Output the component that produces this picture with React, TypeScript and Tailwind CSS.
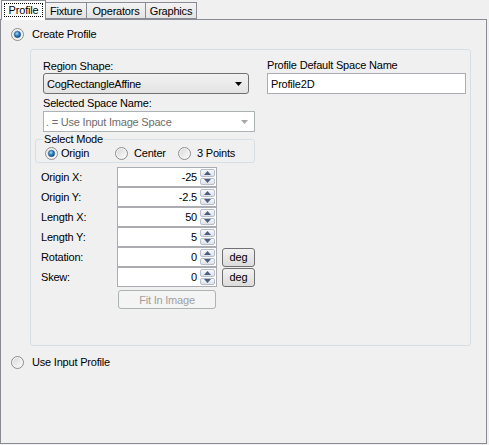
import { useId } from "react";

function Radio({ checked }: { checked?: boolean }) {
  const id = useId();
  return (
    <svg width="13" height="13" viewBox="0 0 13 13" className="shrink-0">
      <defs>
        <linearGradient id={`${id}-o`} x1="0" y1="0" x2="1" y2="1">
          <stop offset="0" stopColor="#d9d9d9" />
          <stop offset="1" stopColor="#fbfbfb" />
        </linearGradient>
        <radialGradient id={`${id}-d`} cx="0.4" cy="0.35" r="0.7">
          <stop offset="0" stopColor="#a9dcfb" />
          <stop offset="0.5" stopColor="#2d7fc0" />
          <stop offset="1" stopColor="#124677" />
        </radialGradient>
      </defs>
      <circle cx="6.5" cy="6.5" r="6" fill="#f5f5f5" stroke="#8d8d8d" strokeWidth="1" />
      <circle cx="6.5" cy="6.5" r="4.5" fill={`url(#${id}-o)`} />
      {checked && <circle cx="6.5" cy="6.5" r="3.2" fill={`url(#${id}-d)`} stroke="#1c4e7e" strokeWidth="0.5" />}
    </svg>
  );
}

function Arrow({ color = "#000" }: { color?: string }) {
  return (
    <svg width="7" height="4" viewBox="0 0 7 4">
      <path d="M0 0h7L3.5 4z" fill={color} />
    </svg>
  );
}

function Spinner() {
  return (
    <div className="flex flex-col w-[16px] h-full gap-[1px] py-[1px] pr-[1px]">
      <div className="flex-1 flex items-center justify-center border border-[#b8bfca] rounded-[2px] bg-gradient-to-b from-[#f7f8fa] to-[#dde2e9]">
        <svg width="7" height="4" viewBox="0 0 7 4">
          <path d="M0 4h7L3.5 0z" fill="#4a5d7e" />
        </svg>
      </div>
      <div className="flex-1 flex items-center justify-center border border-[#b8bfca] rounded-[2px] bg-gradient-to-b from-[#f7f8fa] to-[#dde2e9]">
        <svg width="7" height="4" viewBox="0 0 7 4">
          <path d="M0 0h7L3.5 4z" fill="#4a5d7e" />
        </svg>
      </div>
    </div>
  );
}

const rows = [
  { label: "Origin X:", value: "-25" },
  { label: "Origin Y:", value: "-2.5" },
  { label: "Length X:", value: "50" },
  { label: "Length Y:", value: "5" },
  { label: "Rotation:", value: "0", unit: true },
  { label: "Skew:", value: "0", unit: true },
];

const tabs = [
  { name: "Profile", w: "w-[45px]" },
  { name: "Fixture", w: "w-[42px]" },
  { name: "Operators", w: "w-[60px]" },
  { name: "Graphics", w: "w-[52px]" },
];

export default function App() {
  return (
    <div className="w-[489px] h-[445px] bg-[#f0f0f0] text-black text-[11px] leading-[14px] tracking-[-0.2px] font-['Liberation_Sans',Arial,sans-serif] flex flex-col">
      {/* tab headers */}
      <div className="relative z-10 flex items-start h-[20px] pl-[1px]">
        {tabs.map((t, i) =>
          i === 0 ? (
            <div
              key={t.name}
              className={`${t.w} h-[20px] bg-white border border-b-0 border-[#898c95] flex items-start justify-center pt-[2px]`}
            >
              <span className="border border-dotted border-black px-[4px] leading-[12px] h-[14px]">{t.name}</span>
            </div>
          ) : (
            <div
              key={t.name}
              className={`${t.w} -ml-px mt-[2px] h-[17px] border border-[#898c95] bg-gradient-to-b from-[#f3f3f3] to-[#e4e4e4] flex items-center justify-center`}
            >
              {t.name}
            </div>
          )
        )}
      </div>

      {/* tab page */}
      <div className="-mt-px w-[487px] h-[425px] border border-[#898c95] flex flex-col pl-[10px] pt-[7px]">
        <div className="flex items-center h-[14px]">
          <Radio checked />
          <span className="ml-[8px]">Create Profile</span>
        </div>

        <div className="ml-[19px] mt-[8px] w-[441px] h-[297px] border border-[#d5dfe5] rounded-[3px] flex pl-[12px] pt-[9px]">
          {/* left column */}
          <div className="flex flex-col w-[212px]">
            <div className="h-[14px]">Region Shape:</div>
            <div className="w-[206px] h-[21px] border border-[#707070] rounded-[3px] bg-gradient-to-b from-[#f2f2f2] to-[#e3e3e3] flex items-center justify-between pl-[3px] pr-[6px]">
              <span>CogRectangleAffine</span>
              <Arrow />
            </div>
            <div className="h-[14px] mt-[2px]">Selected Space Name:</div>
            <div className="mt-[1px] w-[212px] h-[21px] border border-[#adb2b5] bg-white flex items-center justify-between pl-[2px] pr-[6px] text-[#6d6d6d]">
              <span>. = Use Input Image Space</span>
              <Arrow color="#a7a7a7" />
            </div>

            <fieldset className="-ml-[8px] w-[220px] border border-[#d5dfe5] rounded-[3px] pl-[9px] pb-[2px]">
              <legend className="-ml-[2px] px-[1px] leading-[14px]">Select Mode</legend>
              <div className="flex items-center h-[14px]">
                <div className="flex items-center w-[70px]">
                  <Radio checked />
                  <span className="ml-[3px]">Origin</span>
                </div>
                <div className="flex items-center w-[63px]">
                  <Radio />
                  <span className="ml-[6px]">Center</span>
                </div>
                <div className="flex items-center">
                  <Radio />
                  <span className="ml-[6px]">3 Points</span>
                </div>
              </div>
            </fieldset>

            {/* numeric fields */}
            <div className="mt-[4px] -ml-[2px] grid grid-cols-[76px_100px_auto] auto-rows-[20px]">
              {rows.map((r) => (
                <div key={r.label} className="contents">
                  <div className="flex items-center">{r.label}</div>
                  <div className="w-[100px] h-[20px] border border-[#abadb3] bg-white flex items-stretch">
                    <div className="flex-1 flex items-center justify-end pr-[3px]">{r.value}</div>
                    <Spinner />
                  </div>
                  {r.unit ? (
                    <div className="flex items-center pl-[5px]">
                      <div className="w-[33px] h-[19px] border border-[#707070] rounded-[3px] bg-gradient-to-b from-[#f2f2f2] to-[#dcdcdc] flex items-center justify-center">
                        deg
                      </div>
                    </div>
                  ) : (
                    <div />
                  )}
                </div>
              ))}
            </div>

            <div className="mt-[3px] ml-[75px] w-[98px] h-[19px] border border-[#adb2b5] rounded-[3px] bg-[#f4f4f4] text-[#a0a0a0] flex items-center justify-center">
              Fit In Image
            </div>
          </div>

          {/* right column */}
          <div className="flex flex-col ml-[12px] -mt-[1px]">
            <div className="h-[14px]">Profile Default Space Name</div>
            <div className="mt-[1px] w-[199px] h-[21px] border border-[#abadb3] bg-white flex items-center pl-[3px]">
              Profile2D
            </div>
          </div>
        </div>

        <div className="flex items-center h-[14px] mt-[9px]">
          <Radio />
          <span className="ml-[8px]">Use Input Profile</span>
        </div>
      </div>
    </div>
  );
}
